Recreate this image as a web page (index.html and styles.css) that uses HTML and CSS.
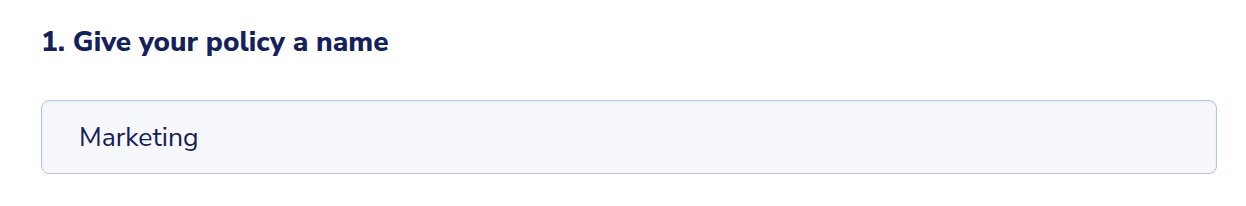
FILE: index.html
```html
<!DOCTYPE html>
<html lang="en">
<head>
  <meta charset="UTF-8">
  <title>Policy name</title>
  <link rel="stylesheet" href="styles.css">
</head>
<body>
  <section class="policy-step">
    <h2 class="step-title">1. Give your policy a name</h2>
    <input type="text" class="name-input" value="Marketing">
  </section>
</body>
</html>
```

FILE: styles.css
```css
* {
  margin: 0;
  padding: 0;
  box-sizing: border-box;
  font-family: 'Nunito Sans', Lato, 'Open Sans', sans-serif;
}

body {
  background-color: #ffffff;
  color: #15215a;
}

.policy-step {
  padding: 24px 29px 0 41px;
  display: flex;
  flex-direction: column;
  gap: 40px;
}

.step-title {
  font-size: 28px;
  font-weight: 800;
  line-height: 36px;
  color: #15215a;
}

.name-input {
  width: 100%;
  height: 74px;
  padding: 0 37px;
  background-color: #f7f8fb;
  border: 1px solid #b4c2ef;
  border-radius: 8px;
  box-shadow: inset 0 1px 3px rgba(20, 31, 82, 0.06);
  color: #15215a;
  font-size: 26.6px;
  outline: none;
}
```
